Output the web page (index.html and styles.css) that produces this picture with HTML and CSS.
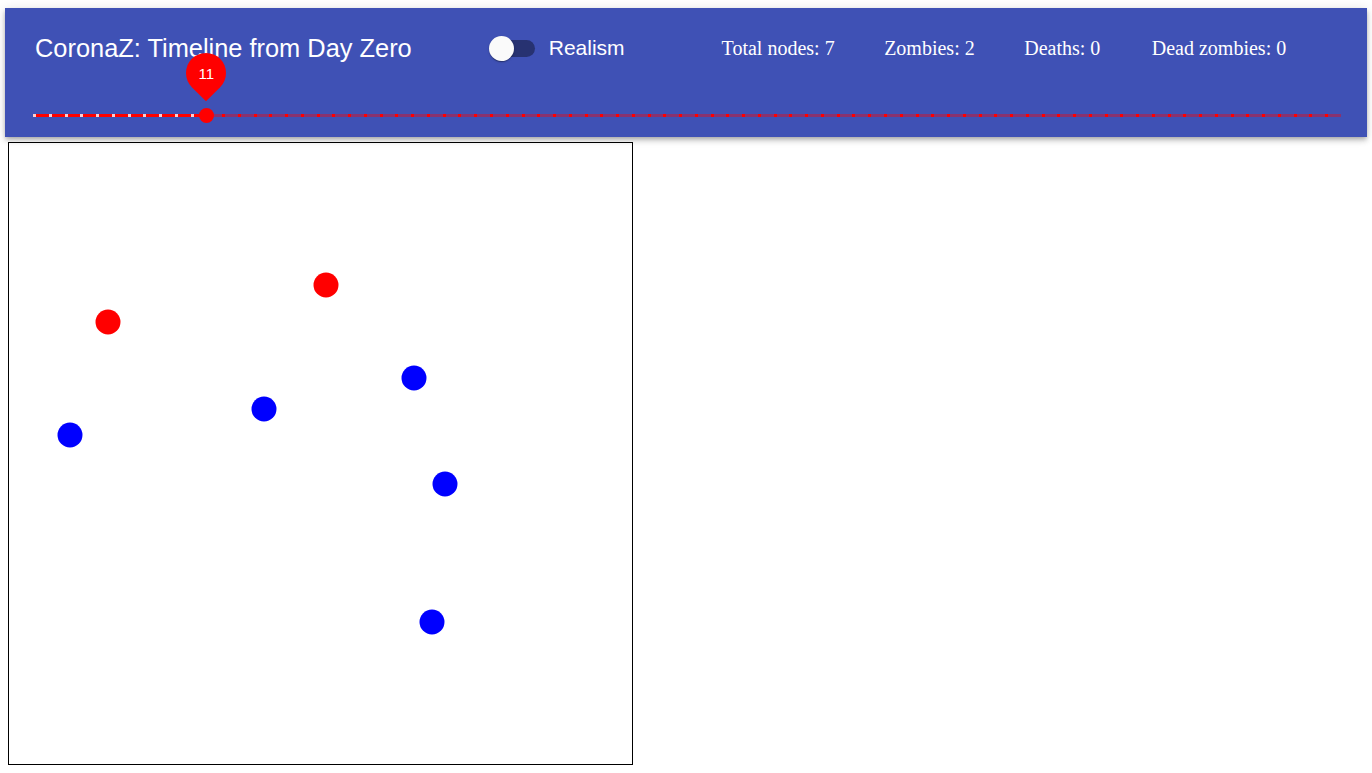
FILE: index.html
```html
<!DOCTYPE html>
<html lang="en">
<head>
<meta charset="utf-8">
<title>CoronaZ</title>
<link rel="stylesheet" href="styles.css">
</head>
<body>
<header class="appbar">
  <div class="toolbar">
    <h1 class="title">CoronaZ: Timeline from Day Zero</h1>
    <label class="realism">
      <span class="switch"><span class="switch-track"></span><span class="switch-thumb"></span></span>
      <span class="realism-text">Realism</span>
    </label>
    <div class="stats">
      <span class="stat">Total nodes: 7</span>
      <span class="stat">Zombies: 2</span>
      <span class="stat">Deaths: 0</span>
      <span class="stat stat-last">Dead zombies: 0</span>
    </div>
  </div>
  <div class="slider-row">
    <div class="slider">
      <div class="slider-rail"></div>
      <div class="slider-active" style="width:173.3px"></div>
      <span class="slider-thumb" style="left:165.8px"></span>
      <span class="value-label" style="left:153.3px"><span class="value-text">11</span></span>
    </div>
  </div>
</header>
<main class="board">
  <svg class="canvas" width="623" height="621" viewBox="0 0 623 621">
    <circle cx="99" cy="179" r="12.5" fill="#ff0000"/>
    <circle cx="317" cy="142" r="12.5" fill="#ff0000"/>
    <circle cx="61" cy="292" r="12.5" fill="#0000ff"/>
    <circle cx="255" cy="266" r="12.5" fill="#0000ff"/>
    <circle cx="405" cy="235" r="12.5" fill="#0000ff"/>
    <circle cx="436" cy="341" r="12.5" fill="#0000ff"/>
    <circle cx="423" cy="479" r="12.5" fill="#0000ff"/>
  </svg>
</main>
</body>
</html>
```
FILE: styles.css
```css
* { box-sizing: border-box; }
html, body { margin: 0; padding: 0; background: #ffffff; }
body { font-family: "Liberation Serif", "Times New Roman", serif; }

.appbar {
  margin: 8px 5px 0 5px;
  height: 129px;
  background: #3f51b5;
  color: #ffffff;
  display: flex;
  flex-direction: column;
  box-shadow: 0 2px 4px -1px rgba(0,0,0,0.2), 0 4px 5px 0 rgba(0,0,0,0.14), 0 1px 10px 0 rgba(0,0,0,0.12);
}

.toolbar {
  height: 80px;
  display: flex;
  align-items: center;
  padding-left: 30px;
}

.title {
  margin: 0 77px 0 0;
  font-family: "Liberation Sans", Arial, sans-serif;
  font-size: 25.4px;
  font-weight: 400;
  line-height: normal;
}

.realism {
  display: flex;
  align-items: center;
}

.switch {
  position: relative;
  width: 46px;
  height: 25px;
  display: flex;
  align-items: center;
  justify-content: flex-end;
}
.switch-track {
  width: 42px;
  height: 17px;
  border-radius: 9px;
  background: #273271;
}
.switch-thumb {
  position: absolute;
  left: 0;
  top: 0;
  width: 25px;
  height: 25px;
  border-radius: 50%;
  background: #fafafa;
  box-shadow: 0 2px 1px -1px rgba(0,0,0,0.2), 0 1px 1px 0 rgba(0,0,0,0.14), 0 1px 3px 0 rgba(0,0,0,0.12);
}

.realism-text {
  margin-left: 14px;
  font-family: "Liberation Sans", Arial, sans-serif;
  font-size: 21px;
}

.stats {
  margin-left: 97px;
  display: flex;
  gap: 49.5px;
  font-size: 20px;
}
.stat-last { margin-left: 2px; }

.slider-row {
  height: 49px;
  padding: 26px 26px 0 28px;
}
.slider {
  position: relative;
  height: 3px;
}
.slider-rail {
  height: 3px;
  background-color: rgba(255,0,0,0.38);
  background-image: repeating-linear-gradient(to right, #ff0000 0, #ff0000 3px, transparent 3px, transparent 15.759px);
}
.slider-active {
  position: absolute;
  left: 0;
  top: 0;
  height: 3px;
  background-color: #ff0000;
  background-image: repeating-linear-gradient(to right, rgba(255,255,255,0.8) 0, rgba(255,255,255,0.8) 3px, transparent 3px, transparent 15.759px);
}
.slider-thumb {
  position: absolute;
  top: -6px;
  width: 15px;
  height: 15px;
  border-radius: 50%;
  background: #ff0000;
}
.value-label {
  position: absolute;
  top: -61px;
  width: 40px;
  height: 40px;
  border-radius: 50% 50% 50% 0;
  background: #ff0000;
  transform: rotate(-45deg);
  display: flex;
  align-items: center;
  justify-content: center;
}
.value-text {
  transform: rotate(45deg);
  font-family: "Liberation Sans", Arial, sans-serif;
  font-size: 15px;
  color: #ffffff;
  line-height: 1;
}

.board {
  padding: 5px 0 0 8px;
}
.canvas {
  display: block;
  border: 1px solid #000000;
  box-sizing: content-box;
}
```
